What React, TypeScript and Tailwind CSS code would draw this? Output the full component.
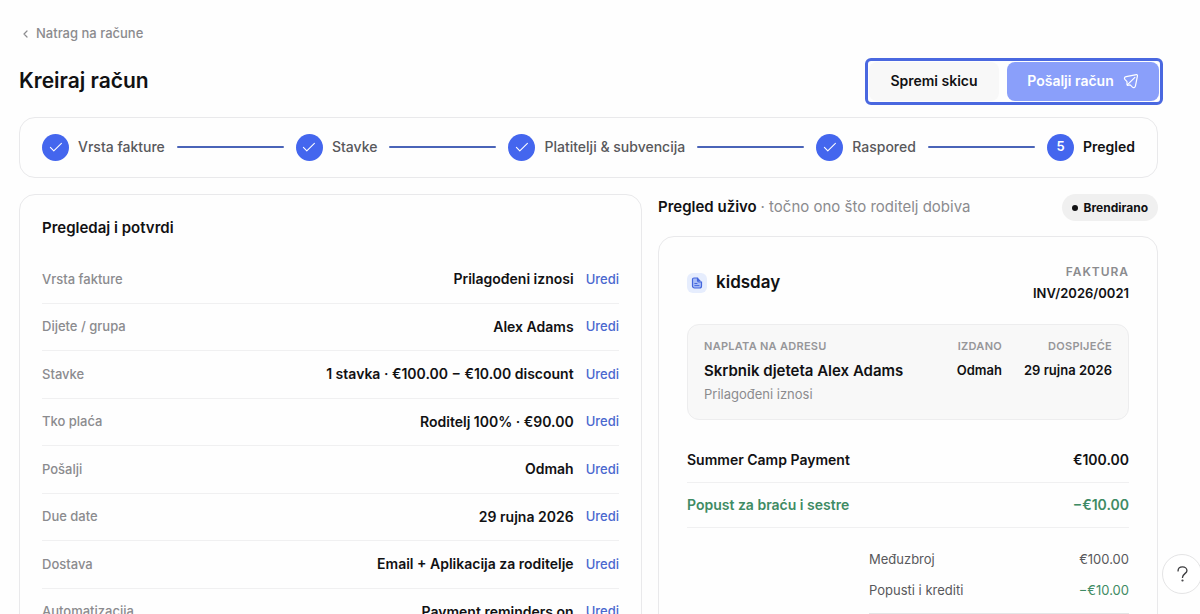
import { Fragment } from "react";

const steps = ["Vrsta fakture", "Stavke", "Platitelji & subvencija", "Raspored", "Pregled"];

const rows = [
  { label: "Vrsta fakture", value: "Prilagođeni iznosi" },
  { label: "Dijete / grupa", value: "Alex Adams" },
  { label: "Stavke", value: "1 stavka · €100.00 − €10.00 discount" },
  { label: "Tko plaća", value: "Roditelj 100% · €90.00" },
  { label: "Pošalji", value: "Odmah" },
  { label: "Due date", value: "29 rujna 2026" },
  { label: "Dostava", value: "Email + Aplikacija za roditelje" },
  { label: "Automatizacija", value: "Payment reminders on" },
];

function CheckIcon() {
  return (
    <svg className="size-[14px]" viewBox="0 0 14 14" fill="none" stroke="currentColor" strokeWidth="1.1" strokeLinecap="round" strokeLinejoin="round" aria-hidden="true">
      <path d="M1.4 7.4 4.8 10.8 12.4 3.4" />
    </svg>
  );
}

function SendIcon() {
  return (
    <svg className="size-4" viewBox="0 0 16 16" fill="none" stroke="currentColor" strokeWidth="1.2" strokeLinecap="round" strokeLinejoin="round" aria-hidden="true">
      <path d="M13.400 1.700 3.200 3.700C1.300 4.100.9 5.400 2.100 6.700L4 8.600V11.200C4 12.100 4.600 12.500 5.500 12.200L7.200 11.900 9.200 13.900C10.500 15.100 11.900 14.700 12.400 13.100L14.400 3.100C14.600 2.100 14.300 1.600 13.400 1.700Z" />
      <path d="M4.300 11.900 11.900 4.400" />
    </svg>
  );
}

function Stepper() {
  return (
    <ol className="flex h-[61px] items-center gap-3 rounded-2xl border border-[#e9e9eb] px-[22px] pb-px">
      {steps.map((step, i) => {
        const current = i === steps.length - 1;
        return (
          <Fragment key={step}>
            <li className="flex shrink-0 items-center gap-[9px]" aria-current={current ? "step" : undefined}>
              <span className="grid size-[27px] place-items-center rounded-full bg-[#4466ee] text-[13px] font-semibold text-white">
                {current ? i + 1 : <CheckIcon />}
              </span>
              <span className={current ? "text-sm font-semibold text-[#111113]" : "text-sm font-medium text-[#58585b]"}>{step}</span>
            </li>
            {!current && <li className="h-0.5 flex-1 rounded-full bg-[#4a64b8]" aria-hidden="true" />}
          </Fragment>
        );
      })}
    </ol>
  );
}

function Review() {
  return (
    <section className="rounded-2xl border border-[#e9e9eb] px-[22px] pt-[21px] pb-6">
      <h2 className="text-[15px] leading-6 font-semibold">Pregledaj i potvrdi</h2>
      <dl className="mt-4 flex h-[380px] flex-col">
        {rows.map((row) => (
          <div key={row.label} className="flex flex-1 items-center border-b border-[#f0f0f1]">
            <dt className="flex-1 text-[13px] font-medium text-[#8b8b8e]">{row.label}</dt>
            <dd className="flex items-center gap-3">
              <span className="text-sm font-semibold">{row.value}</span>
              <button type="button" aria-label={`Uredi: ${row.label}`} className="text-[13px] font-medium text-[#4a68cf]">
                Uredi
              </button>
            </dd>
          </div>
        ))}
      </dl>
    </section>
  );
}

function Preview() {
  return (
    <section>
      <header className="flex h-[27px] items-center justify-between">
        <h2 className="text-[15px] font-semibold">
          Pregled uživo <span className="font-normal text-[#8b8b8e]">· točno ono što roditelj dobiva</span>
        </h2>
        <span className="flex h-[27px] items-center gap-1.5 rounded-full bg-[#f0f0f0] px-[10px] text-xs font-bold">
          <span className="size-1.5 rounded-full bg-[#111113]" />
          Brendirano
        </span>
      </header>
      <article className="mt-[15px] rounded-2xl border border-[#e9e9eb] px-7 pt-[25px] pb-10">
        <div className="flex items-center justify-between">
          <div className="flex items-center gap-[9px]">
            <span className="grid size-5 place-items-center rounded-md bg-[#e6edfd] text-[#4466dd]">
              <svg className="size-3" viewBox="0 0 12 12" aria-hidden="true">
                <path d="M3 1h3.5v2.6c0 .8.6 1.4 1.4 1.4H10.500v4a2 2 0 0 1-2 2H3.500a2 2 0 0 1-2-2V2.500A1.500 1.500 0 0 1 3 1Z" fill="#a9bdf6" stroke="currentColor" strokeWidth="1.2" />
                <path d="M7 1 10.300 4.500H8A1 1 0 0 1 7 3.500Z" fill="currentColor" />
                <path d="M3.800 6.500H6M3.800 8.600H8" stroke="currentColor" strokeLinecap="round" />
              </svg>
            </span>
            <span className="text-[17px] font-semibold">kidsday</span>
          </div>
          <div className="text-right">
            <p className="text-xs leading-5 font-semibold tracking-[0.08em] text-[#8b8b8e]">FAKTURA</p>
            <p className="text-[13px] leading-[22px] font-semibold">INV/2026/0021</p>
          </div>
        </div>
        <div className="mt-5 flex h-24 rounded-xl border border-[#ededee] bg-[#f8f8f8] px-4 py-3">
          <div className="flex-1">
            <p className="text-[11px] leading-[18px] font-semibold tracking-wide text-[#969699]">NAPLATA NA ADRESU</p>
            <p className="mt-1 text-[15px] leading-6 font-semibold">Skrbnik djeteta Alex Adams</p>
            <p className="text-[13px] leading-[22px] text-[#8b8b8e]">Prilagođeni iznosi</p>
          </div>
          <dl className="flex gap-[22px] text-right">
            <div>
              <dt className="text-[11px] leading-[18px] font-semibold tracking-wide text-[#969699]">IZDANO</dt>
              <dd className="mt-1 text-[13px] leading-[22px] font-semibold">Odmah</dd>
            </div>
            <div>
              <dt className="text-[11px] leading-[18px] font-semibold tracking-wide text-[#969699]">DOSPIJEĆE</dt>
              <dd className="mt-1 text-[13px] leading-[22px] font-semibold">29 rujna 2026</dd>
            </div>
          </dl>
        </div>
        <ul className="mt-[18px] text-sm font-semibold">
          <li className="flex h-[45px] items-center justify-between border-b border-[#f0f0f1]">
            <span>Summer Camp Payment</span>
            <span>€100.00</span>
          </li>
          <li className="flex h-[45px] items-center justify-between border-b border-[#f0f0f1] text-[#3f8b64]">
            <span>Popust za braću i sestre</span>
            <span>−€10.00</span>
          </li>
        </ul>
        <dl className="mt-4 ml-auto w-[260px] border-b-2 border-[#e4e4e5] pb-[7px] text-[13px] text-[#58585b]">
          <div className="flex h-[31px] items-center justify-between">
            <dt>Međuzbroj</dt>
            <dd>€100.00</dd>
          </div>
          <div className="flex h-[31px] items-center justify-between">
            <dt>Popusti i krediti</dt>
            <dd className="text-[#3f8b64]">−€10.00</dd>
          </div>
        </dl>
      </article>
    </section>
  );
}

export default function App() {
  return (
    <div className="relative h-screen overflow-hidden bg-[#fefefe] font-['Inter',sans-serif] text-[#111113]">
      <main className="pt-6 pr-[42px] pl-[19px]">
        <a href="#racuni" className="flex h-5 w-fit items-center gap-2 pl-1 text-[13px] font-medium text-[#8b8b8e]">
          <svg className="h-2 w-[5px]" viewBox="0 0 5 8" fill="none" stroke="currentColor" strokeWidth="1.2" strokeLinecap="round" strokeLinejoin="round" aria-hidden="true">
            <path d="M4 1 1 4 4 7" />
          </svg>
          Natrag na račune
        </a>
        <div className="mt-[13px] flex h-12 items-center justify-between">
          <h1 className="text-[21px] font-semibold">Kreiraj račun</h1>
          <div className="-mr-[5px] flex h-[47px] gap-2 rounded-md border-3 border-[#4a68e0] p-px">
            <button type="button" className="w-[130px] rounded-lg bg-[#f8f8f8] text-sm font-semibold">
              Spremi skicu
            </button>
            <button type="button" className="flex w-[152px] items-center justify-center gap-[9px] rounded-lg bg-[#8a9ffa] text-sm font-semibold text-white">
              Pošalji račun
              <SendIcon />
            </button>
          </div>
        </div>
        <div className="mt-3">
          <Stepper />
        </div>
        <div className="mt-4 grid grid-cols-[623fr_500fr] items-start gap-4">
          <Review />
          <Preview />
        </div>
      </main>
      <button type="button" aria-label="Pomoć" className="absolute -right-0.5 bottom-5 grid size-10 place-items-center rounded-full border border-[#e4e4e5] bg-white text-[#3c3c3f]">
        <svg className="h-4 w-[11px]" viewBox="0 0 12 18" fill="none" stroke="currentColor" strokeWidth="1.5" strokeLinecap="round" strokeLinejoin="round" aria-hidden="true">
          <path d="M1 5.500C1 2.800 3.200 1 6 1S11 2.800 11 5.300C11 8.500 6 8.800 6 12.800" />
          <circle cx="6" cy="16.300" r=".5" fill="currentColor" />
        </svg>
      </button>
    </div>
  );
}
